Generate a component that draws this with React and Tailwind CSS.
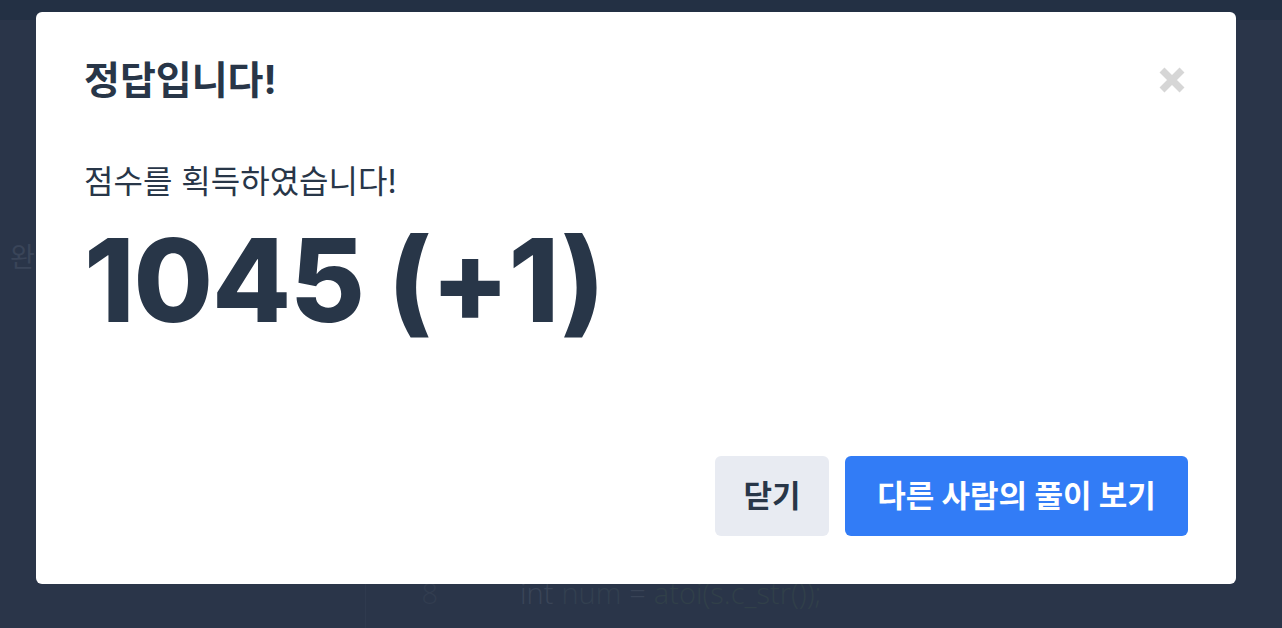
const CloseIcon = () => (
  <svg width="26" height="26" viewBox="0 0 26 26">
    <path d="M3 3 L23 23 M23 3 L3 23" stroke="#d6d6d6" strokeWidth="7" />
  </svg>
);

const ResultModal = () => {
  return (
    <div className="w-[1200px] h-[572px] bg-white rounded-md p-12 flex flex-col">
      {/* Header */}
      <div className="flex items-center justify-between">
        <h2 className="text-[39px] leading-[40px] font-bold text-[#283648]">정답입니다!</h2>
        <button className="w-8 h-8 flex items-center justify-center">
          <CloseIcon />
        </button>
      </div>

      {/* Body */}
      <p className="mt-[64px] text-[32px] leading-[36px] text-[#283648]">점수를 획득하였습니다!</p>
      <p className="mt-[23px] text-[115px] leading-none font-extrabold tracking-[-0.01em] text-[#283648]">
        1045 (+1)
      </p>

      {/* Footer */}
      <div className="mt-auto flex justify-end gap-4">
        <button className="h-20 w-[114px] rounded-md bg-[#e8ebf2] text-[31px] font-bold text-[#283648]">
          닫기
        </button>
        <button className="h-20 w-[343px] rounded-md bg-[#327cf6] text-[31px] font-bold text-white">
          다른 사람의 풀이 보기
        </button>
      </div>
    </div>
  );
};

export default function App() {
  return (
    <div
      className="relative w-full h-[628px] overflow-hidden bg-[#2a3549]"
      style={{ fontFamily: 'Inter, "Noto Sans CJK KR", sans-serif' }}
    >
      {/* page under the overlay */}
      <div className="h-5 bg-[#233044]" />
      <div className="flex h-[608px]">
        <div className="w-[365px] flex flex-col">
          <div className="mt-[218px] pl-[10px] text-[27px] text-[#3a4559]">완</div>
        </div>
        <div className="flex-1 flex flex-col border-l border-[#2f3a4e]">
          <div className="mt-auto mb-[14px] flex items-center text-[29px] font-light" style={{ fontFamily: '"Open Sans", sans-serif' }}>
            <span className="w-[72px] text-right text-[#323d50]">8</span>
            <span className="ml-[82px] text-[#3a4558]">int</span>
            <span className="ml-[8px] text-[#334050]">num</span>
            <span className="ml-[8px] text-[#394457]">=</span>
            <span className="ml-[8px] text-[#314049]">atoi(s.c_str());</span>
          </div>
        </div>
      </div>

      {/* overlay */}
      <div className="absolute inset-0 flex items-start pt-3 pl-9">
        <ResultModal />
      </div>
    </div>
  );
}
